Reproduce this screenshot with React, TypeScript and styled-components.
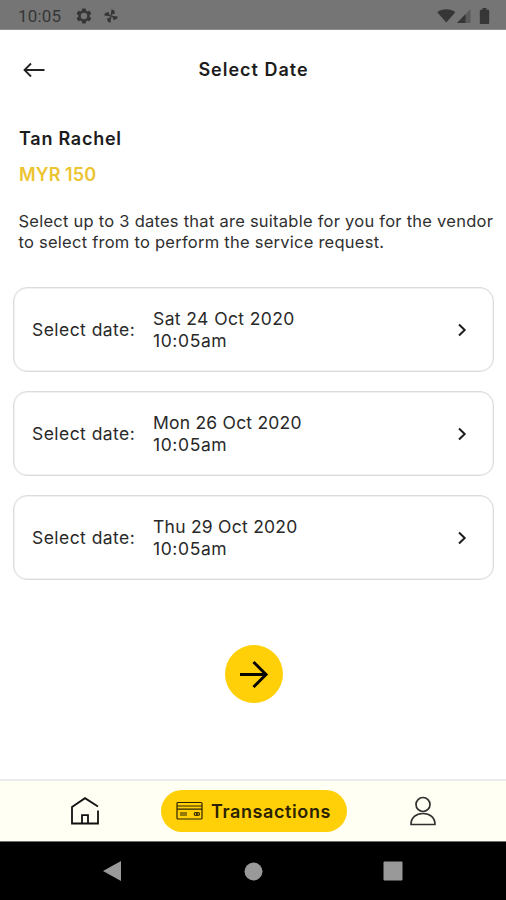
import React from "react";
import styled, { createGlobalStyle } from "styled-components";

const GlobalStyle = createGlobalStyle`
  * { box-sizing: border-box; }
  body { margin: 0; background: #fff; }
  button { border: 0; padding: 0; background: none; font: inherit; color: inherit; }
  svg { display: block; flex: none; }
`;

const Screen = styled.div`
  width: 506px;
  height: 900px;
  display: flex;
  flex-direction: column;
  overflow: hidden;
  background: #fff;
  color: #1c1c1c;
  font-family: Inter, Roboto, sans-serif;
`;

const StatusBar = styled.header`
  height: 30px;
  flex: none;
  display: flex;
  align-items: center;
  padding: 2px 16px 0 18px;
  background: #757575;
  border-bottom: 1px solid #8c8c8c;
  color: #363636;
`;

const Clock = styled.span`
  width: 57px;
  font: 400 17px/20px Roboto, sans-serif;
  letter-spacing: 0.2px;
`;

const StatusIcons = styled.div<{ $gap: number; $end?: boolean }>`
  display: flex;
  align-items: center;
  gap: ${(p) => p.$gap}px;
  margin-left: ${(p) => (p.$end ? "auto" : "0")};
`;

const TitleBar = styled.div`
  height: 80px;
  flex: none;
  display: grid;
  grid-template-columns: 60px 1fr 60px;
  align-items: center;
`;

const BackButton = styled.button`
  padding-left: 23px;
`;

const Title = styled.h1`
  margin: 0;
  padding-left: 1px;
  text-align: center;
  font-size: 18px;
  font-weight: 600;
  line-height: 24px;
  letter-spacing: 1px;
`;

const Main = styled.main`
  flex: 1;
  display: flex;
  flex-direction: column;
  padding: 17px 12px 0 13px;
`;

const Intro = styled.section`
  padding: 0 0 0 6px;
  height: 160px;
`;

const Name = styled.div`
  font-size: 18px;
  font-weight: 600;
  line-height: 24px;
  letter-spacing: 0.75px;
`;

const Amount = styled.div`
  margin-top: 12px;
  font-size: 18px;
  font-weight: 600;
  line-height: 24px;
  letter-spacing: 0.1px;
  color: #ecc431;
`;

const Description = styled.p`
  margin: 24px 0 0 -0.5px;
  font-size: 16.5px;
  line-height: 20.5px;
  letter-spacing: 0.25px;
  color: #303030;
`;

const DescriptionLine = styled.span`
  display: block;
  white-space: nowrap;
`;

const DateList = styled.div`
  display: flex;
  flex-direction: column;
  gap: 19px;
`;

const DateCard = styled.button`
  height: 85px;
  display: flex;
  align-items: center;
  padding: 1px 25px 0 18px;
  border: 1px solid #dcdcdc;
  border-radius: 14px;
  box-shadow: inset 0 0 0 1px #f2f2f2;
  text-align: left;
  font-size: 17.5px;
  line-height: 22.5px;
  color: #292929;
`;

const CardLabel = styled.span`
  width: 121px;
  letter-spacing: 0.45px;
`;

const CardValue = styled.span`
  flex: 1;
  display: flex;
  flex-direction: column;
`;

const Line = styled.span<{ $tracking: number }>`
  letter-spacing: ${(p) => p.$tracking}px;
`;

const NextButton = styled.button`
  width: 58px;
  height: 58px;
  margin: 65px auto 0;
  display: grid;
  place-items: center;
  border-radius: 50%;
  background: #ffd008;
`;

const TabBar = styled.nav`
  height: 63px;
  flex: none;
  display: grid;
  grid-template-columns: 161px 186px 1fr;
  align-items: center;
  background: #fffff3;
  border-top: 2px solid #ececec;
  border-bottom: 1px solid #70706c;
`;

const Tab = styled.button<{ $left?: number; $right?: number }>`
  display: flex;
  justify-content: center;
  padding-left: ${(p) => p.$left ?? 0}px;
  padding-right: ${(p) => p.$right ?? 0}px;
`;

const ActiveTab = styled.button`
  height: 42px;
  display: flex;
  align-items: center;
  padding-left: 15px;
  gap: 8px;
  border-radius: 21px;
  background: #ffd008;
  color: #2b2300;
  font-size: 18px;
  font-weight: 600;
  letter-spacing: 0.6px;
`;

const SystemBar = styled.footer`
  height: 58px;
  flex: none;
  display: grid;
  grid-template-columns: 183px 140px 140px;
  align-items: center;
  background: #000;
`;

const SystemKey = styled.button<{ $left: number }>`
  padding-left: ${(p) => p.$left}px;
`;

const Gear = () => (
  <svg width="18" height="18" viewBox="0 0 24 24" fill="currentColor" fillRule="evenodd">
    <path d="M19.4 13c.1-.3.1-.7.1-1s0-.7-.1-1l2.1-1.7c.2-.1.2-.4.1-.6l-2-3.5c-.1-.2-.4-.3-.6-.2l-2.5 1a7 7 0 0 0-1.7-1l-.4-2.6c0-.2-.2-.4-.5-.4h-4c-.3 0-.5.2-.5.4L9 5a7 7 0 0 0-1.7 1l-2.5-1c-.2-.1-.5 0-.6.2l-2 3.5c-.1.2-.1.5.1.6L4.5 11c-.1.3-.1.7-.1 1s0 .7.1 1l-2.2 1.7c-.2.1-.2.4-.1.6l2 3.5c.1.2.4.3.6.2l2.5-1a7 7 0 0 0 1.7 1l.4 2.6c0 .2.2.4.5.4h4c.3 0 .5-.2.5-.4l.4-2.6a7 7 0 0 0 1.7-1l2.5 1c.2.1.5 0 .6-.2l2-3.5c.1-.2.1-.5-.1-.6zM12 16.3a4.3 4.3 0 1 1 0-8.6 4.3 4.3 0 0 1 0 8.6z" />
  </svg>
);

const Pinwheel = () => (
  <svg width="16" height="16" viewBox="0 0 16 16" fill="currentColor">
    <g transform="rotate(8 8 8)">
      {[0, 90, 180, 270].map((angle) => (
        <path key={angle} transform={`rotate(${angle} 8 8)`} d="M7.6 7.6V1.2C10.5 1.2 11.7 3.4 11.3 5.6H9.2V7.6Z" />
      ))}
    </g>
  </svg>
);

const Wifi = () => (
  <svg width="20" height="16" viewBox="0 0 20 16" fill="currentColor">
    <path d="M9.3 14.5.3 4.2C5 .4 13.600.4 18.300 4.200Z" />
  </svg>
);

const Signal = () => (
  <svg width="15" height="16" viewBox="0 0 15 16">
    <path d="M13.5 1v14H0Z" fill="#5b5b5b" />
    <path d="M8.500 6.200V15H0Z" fill="currentColor" />
  </svg>
);

const Battery = () => (
  <svg width="18" height="16" viewBox="-8 0 18 16" fill="currentColor">
    <path d="M2.500 0h4v1.800h1.700q1 0 1 1V15q0 1-1 1H.800q-1 0-1-1V2.800q0-1 1-1H2.500Z" />
  </svg>
);

const BackArrow = () => (
  <svg width="23" height="16" viewBox="0 0 23 16" fill="none" stroke="#222" strokeWidth="1.8">
    <path d="M8 1.5 1.500 8l6.500 6.500M1.500 8h20" />
  </svg>
);

const Chevron = () => (
  <svg width="12" height="14" viewBox="0 0 12 14" fill="none" stroke="#1e1e1e" strokeWidth="2">
    <path d="M3 1.500 8.700 7 3 12.500" />
  </svg>
);

const NextArrow = () => (
  <svg width="30" height="28" viewBox="0 0 30 28" fill="none" stroke="#080600" strokeWidth="3">
    <path d="M1 14.500h26M14.500 2 27 14.500 14.500 27" />
  </svg>
);

const Home = () => (
  <svg width="30" height="30" viewBox="0 0 30 30" fill="none" stroke="#111" strokeWidth="1.8">
    <path d="M28 10.500 15 2.200 2 11v16.500h26V14.500M12 27.500v-8.300h6v8.300" />
  </svg>
);

const Card = () => (
  <svg width="27" height="20" viewBox="0 0 27 20" fill="none" stroke="currentColor" strokeWidth="1.2">
    <rect x="1" y="1.5" width="25" height="16.5" rx="1" />
    <path d="M1 5h25M1 8.200h25M4 12h7M4 14h7" />
    <ellipse cx="19.700" cy="13" rx="1.500" ry="1.500" />
    <ellipse cx="22" cy="13" rx="1.500" ry="1.500" />
  </svg>
);

const Person = () => (
  <svg width="28" height="30" viewBox="0 0 28 30" fill="none" stroke="#303030" strokeWidth="1.7">
    <circle cx="14" cy="8.500" r="7" />
    <path d="M2 28.500C2 21.500 7 17.500 14 17.500S26 21.500 26 28.500Z" strokeLinejoin="round" />
  </svg>
);

const dates = [
  { day: "Sat 24 Oct 2020", tracking: 0.4 },
  { day: "Mon 26 Oct 2020", tracking: 0.22 },
  { day: "Thu 29 Oct 2020", tracking: 0.25 },
];

export default function App() {
  return (
    <Screen>
      <GlobalStyle />
      <StatusBar>
        <Clock>10:05</Clock>
        <StatusIcons $gap={10}>
          <Gear />
          <Pinwheel />
        </StatusIcons>
        <StatusIcons $gap={0} $end>
          <Wifi />
          <Signal />
          <Battery />
        </StatusIcons>
      </StatusBar>
      <TitleBar>
        <BackButton aria-label="Back"><BackArrow /></BackButton>
        <Title>Select Date</Title>
      </TitleBar>
      <Main>
        <Intro>
          <Name>Tan Rachel</Name>
          <Amount>MYR 150</Amount>
          <Description>
            <DescriptionLine>Select up to 3 dates that are suitable for you for the vendor</DescriptionLine>
            <DescriptionLine>to select from to perform the service request.</DescriptionLine>
          </Description>
        </Intro>
        <DateList>
          {dates.map(({ day, tracking }) => (
            <DateCard key={day}>
              <CardLabel>Select date:</CardLabel>
              <CardValue>
                <Line $tracking={tracking}>{day}</Line>
                <Line $tracking={0.6}>10:05am</Line>
              </CardValue>
              <Chevron />
            </DateCard>
          ))}
        </DateList>
        <NextButton aria-label="Next"><NextArrow /></NextButton>
      </Main>
      <TabBar>
        <Tab aria-label="Home" $left={8}><Home /></Tab>
        <ActiveTab><Card />Transactions</ActiveTab>
        <Tab aria-label="Profile" $right={8}><Person /></Tab>
      </TabBar>
      <SystemBar>
        <SystemKey $left={102} aria-label="Back">
          <svg width="20" height="22" viewBox="0 0 20 22"><path d="M1 11 19 1v20Z" fill="#999" /></svg>
        </SystemKey>
        <SystemKey $left={61} aria-label="Home">
          <svg width="19" height="19" viewBox="0 0 19 19"><circle cx="9.500" cy="9.500" r="9" fill="#999" /></svg>
        </SystemKey>
        <SystemKey $left={60} aria-label="Recents">
          <svg width="20" height="20" viewBox="0 0 20 20"><rect x=".5" y=".5" width="19" height="19" rx="1" fill="#999" /></svg>
        </SystemKey>
      </SystemBar>
    </Screen>
  );
}
